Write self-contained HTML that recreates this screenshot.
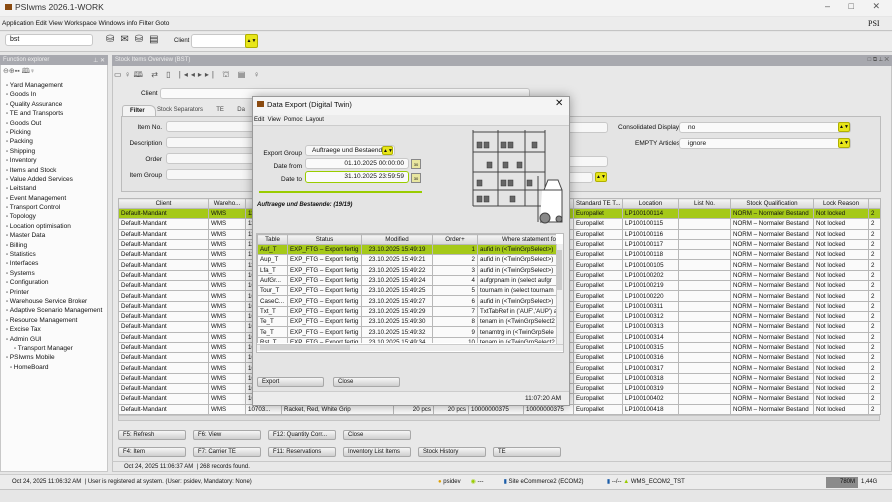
<!DOCTYPE html>
<html><head><meta charset="utf-8"><style>
*{box-sizing:border-box;margin:0;padding:0}
body{width:892px;height:502px;overflow:hidden;background:#e6e6e6;font-family:"Liberation Sans",sans-serif;font-size:7px;color:#111;position:relative}
.a{position:absolute}
.in{position:absolute;background:#f7f7f7;border:1px solid #c8c8c8;border-radius:3px}
.yl{position:absolute;background:#e8e61a;border:1px solid #b0b000;border-radius:2px;font-size:5px;text-align:center;line-height:8px}
table{border-collapse:collapse;table-layout:fixed;position:absolute;font-size:6.2px}
td,th{border:1px solid #b8b8b8;white-space:nowrap;overflow:hidden;padding:0 2px;height:10.3px;line-height:9px}
th{background:linear-gradient(#f4f4f4,#d8d8d8);font-weight:normal;height:9px}
tr.g td{background:#a5c919}
td{background:#fafafa}
.btn{position:absolute;height:10px;background:linear-gradient(#f6f6f6,#cfcfcf);border:1px solid #a8a8a8;border-radius:2px;font-size:6px;line-height:8px;padding-left:4px}
.tree div{height:9.4px;line-height:9.4px;font-size:6.5px;padding-left:6px}
.tree div:before{content:"▫ ";font-size:6px}
</style></head><body>
<div class="a" style="left:0;top:0;width:892px;height:16px;background:#f3f3f3"></div>
<div class="a" style="left:5px;top:4px;width:7px;height:6px;background:#8a4a10"></div>
<div class="a" style="left:15px;top:2px;font-size:8.5px;color:#333">PSIwms 2026.1-WORK</div>
<div class="a" style="left:825px;top:1px;font-size:9px;color:#555;word-spacing:16px">– □ ✕</div>
<div class="a" style="left:0;top:17px;width:892px;height:14px;background:#ececec;border-bottom:1px solid #c4c4c4"></div>
<div class="a" style="left:2px;top:20px;font-size:6.5px">Application Edit View Workspace Windows info Filter Goto</div>
<div class="a" style="left:868px;top:19px;font-size:8px;font-family:'Liberation Serif'">PSI</div>
<div class="a" style="left:0;top:32px;width:892px;height:20px;background:#ececec;border-bottom:1px solid #c4c4c4"></div>
<div class="in" style="left:5px;top:34px;width:88px;height:12px;background:#fff"><span style="position:absolute;left:4px;top:1px">bst</span></div>
<div class="a" style="left:106px;top:34px;font-size:10px;color:#333;letter-spacing:6px">⛁✉⛁▤</div>
<div class="a" style="left:174px;top:38px;font-size:6px">Client</div>
<div class="in" style="left:191px;top:34px;width:67px;height:14px;background:#fff"></div>
<div class="yl" style="left:245px;top:34px;width:13px;height:14px;line-height:12px">▲▼</div>
<div class="a" style="left:0;top:55px;width:108px;height:417px;background:#fbfbfb;border:1px solid #c8c8c8"></div>
<div class="a" style="left:0;top:55px;width:108px;height:10px;background:#a8a9af;color:#eee;font-size:6px;padding:2px 3px">Function explorer<span style="float:right">⊥ ✕</span></div>
<div class="a" style="left:3px;top:67px;font-size:7px;color:#666">⊖⊕▪▪ 🕮♀</div>
<div class="a tree" style="left:0;top:81px;width:108px">
<div>Yard Management</div><div>Goods In</div><div>Quality Assurance</div><div>TE and Transports</div><div>Goods Out</div><div>Picking</div><div>Packing</div><div>Shipping</div><div>Inventory</div><div>Items and Stock</div><div>Value Added Services</div><div>Leitstand</div><div>Event Management</div><div>Transport Control</div><div>Topology</div><div>Location optimisation</div><div>Master Data</div><div>Billing</div><div>Statistics</div><div>Interfaces</div><div>Systems</div><div>Configuration</div><div>Printer</div><div>Warehouse Service Broker</div><div>Adaptive Scenario Management</div><div>Resource Management</div><div>Excise Tax</div><div>Admin GUI</div><div style="padding-left:14px">Transport Manager</div><div>PSIwms Mobile</div><div style="padding-left:10px">HomeBoard</div>
</div>
<div class="a" style="left:112px;top:55px;width:780px;height:417px;background:#e8e8e8;border:1px solid #c4c4c4"></div>
<div class="a" style="left:112px;top:55px;width:780px;height:11px;background:#a8a9af;color:#eee;font-size:6px;padding:2px 3px">Stock Items Overview (BST)<span style="float:right;color:#555">□ ⧉ ⊥ ✕</span></div>
<div class="a" style="left:114px;top:69px;font-size:8px;color:#555;letter-spacing:3px">▭♀🕮 ⇄ ▯ |◂◂▸▸| ⛫ ▤ ♀</div>
<div class="a" style="left:141px;top:90px;font-size:6.5px">Client</div>
<div class="in" style="left:160px;top:88px;width:370px;height:11px;background:#fafafa"></div>
<div class="a" style="left:122px;top:105px;width:34px;height:11px;background:#f3f3f3;border:1px solid #bbb;border-bottom:none;border-radius:3px 6px 0 0;font-weight:bold;font-size:6px;padding:2px 7px">Filter</div>
<div class="a" style="left:157px;top:106px;font-size:6px;color:#444;padding-top:1px">Stock Separators &nbsp;&nbsp;&nbsp;&nbsp;&nbsp;&nbsp; TE &nbsp;&nbsp;&nbsp;&nbsp;&nbsp;&nbsp; Da</div>
<div class="a" style="left:121px;top:116px;width:760px;height:76px;background:#e4e4e4;border:1px solid #bcbcbc"></div>
<div class="a" style="left:126px;top:120px;width:36px;text-align:right;font-size:6.5px;line-height:16px">Item No.<br>Description<br>Order<br>Item Group</div>
<div class="in" style="left:166px;top:121px;width:100px;height:11px"></div>
<div class="in" style="left:166px;top:137px;width:100px;height:11px"></div>
<div class="in" style="left:166px;top:153px;width:100px;height:11px"></div>
<div class="in" style="left:166px;top:169px;width:100px;height:11px"></div>
<div class="in" style="left:565px;top:122px;width:43px;height:11px"></div>
<div class="in" style="left:565px;top:156px;width:43px;height:11px"></div>
<div class="in" style="left:565px;top:172px;width:28px;height:11px"></div>
<div class="yl" style="left:595px;top:172px;width:12px;height:10px">▲▼</div>
<div class="a" style="left:618px;top:124px;font-size:6.5px">Consolidated Display</div>
<div class="a" style="left:635px;top:140px;font-size:6.5px">EMPTY Articles</div>
<div class="in" style="left:679px;top:122px;width:172px;height:11px;padding-left:8px;font-size:6.5px;line-height:9px;background:#fafafa">no</div>
<div class="in" style="left:679px;top:138px;width:172px;height:11px;padding-left:8px;font-size:6.5px;line-height:9px;background:#fafafa">ignore</div>
<div class="yl" style="left:838px;top:122px;width:12px;height:10px">▲▼</div>
<div class="yl" style="left:838px;top:138px;width:12px;height:10px">▲▼</div>
<table style="left:118px;top:198px;width:762px">
<colgroup><col style="width:90px"><col style="width:37px"><col style="width:36px"><col style="width:112px"><col style="width:40px"><col style="width:35px"><col style="width:55px"><col style="width:50px"><col style="width:49px"><col style="width:56px"><col style="width:52px"><col style="width:83px"><col style="width:55px"><col style="width:12px"></colgroup>
<tr><th>Client</th><th>Wareho...</th><th>Item No.</th><th>Description</th><th></th><th></th><th></th><th></th><th>Standard TE T...</th><th>Location</th><th>List No.</th><th>Stock Qualification</th><th>Lock Reason</th><th></th></tr>
<tr class="g"><td>Default-Mandant</td><td>WMS</td><td>11581...</td><td></td><td></td><td></td><td></td><td></td><td>Europallet</td><td>LP100100114</td><td></td><td>NORM – Normaler Bestand</td><td>Not locked</td><td>2</td></tr>
<tr><td>Default-Mandant</td><td>WMS</td><td>11581...</td><td></td><td></td><td></td><td></td><td></td><td>Europallet</td><td>LP100100115</td><td></td><td>NORM – Normaler Bestand</td><td>Not locked</td><td>2</td></tr>
<tr><td>Default-Mandant</td><td>WMS</td><td>11581...</td><td></td><td></td><td></td><td></td><td></td><td>Europallet</td><td>LP100100116</td><td></td><td>NORM – Normaler Bestand</td><td>Not locked</td><td>2</td></tr>
<tr><td>Default-Mandant</td><td>WMS</td><td>11581...</td><td></td><td></td><td></td><td></td><td></td><td>Europallet</td><td>LP100100117</td><td></td><td>NORM – Normaler Bestand</td><td>Not locked</td><td>2</td></tr>
<tr><td>Default-Mandant</td><td>WMS</td><td>11581...</td><td></td><td></td><td></td><td></td><td></td><td>Europallet</td><td>LP100100118</td><td></td><td>NORM – Normaler Bestand</td><td>Not locked</td><td>2</td></tr>
<tr><td>Default-Mandant</td><td>WMS</td><td>11581...</td><td></td><td></td><td></td><td></td><td></td><td>Europallet</td><td>LP100100105</td><td></td><td>NORM – Normaler Bestand</td><td>Not locked</td><td>2</td></tr>
<tr><td>Default-Mandant</td><td>WMS</td><td>10904...</td><td></td><td></td><td></td><td></td><td></td><td>Europallet</td><td>LP100100202</td><td></td><td>NORM – Normaler Bestand</td><td>Not locked</td><td>2</td></tr>
<tr><td>Default-Mandant</td><td>WMS</td><td>10904...</td><td></td><td></td><td></td><td></td><td></td><td>Europallet</td><td>LP100100219</td><td></td><td>NORM – Normaler Bestand</td><td>Not locked</td><td>2</td></tr>
<tr><td>Default-Mandant</td><td>WMS</td><td>10904...</td><td></td><td></td><td></td><td></td><td></td><td>Europallet</td><td>LP100100220</td><td></td><td>NORM – Normaler Bestand</td><td>Not locked</td><td>2</td></tr>
<tr><td>Default-Mandant</td><td>WMS</td><td>10904...</td><td></td><td></td><td></td><td></td><td></td><td>Europallet</td><td>LP100100311</td><td></td><td>NORM – Normaler Bestand</td><td>Not locked</td><td>2</td></tr>
<tr><td>Default-Mandant</td><td>WMS</td><td>10904...</td><td></td><td></td><td></td><td></td><td></td><td>Europallet</td><td>LP100100312</td><td></td><td>NORM – Normaler Bestand</td><td>Not locked</td><td>2</td></tr>
<tr><td>Default-Mandant</td><td>WMS</td><td>10904...</td><td></td><td></td><td></td><td></td><td></td><td>Europallet</td><td>LP100100313</td><td></td><td>NORM – Normaler Bestand</td><td>Not locked</td><td>2</td></tr>
<tr><td>Default-Mandant</td><td>WMS</td><td>10904...</td><td></td><td></td><td></td><td></td><td></td><td>Europallet</td><td>LP100100314</td><td></td><td>NORM – Normaler Bestand</td><td>Not locked</td><td>2</td></tr>
<tr><td>Default-Mandant</td><td>WMS</td><td>10904...</td><td></td><td></td><td></td><td></td><td></td><td>Europallet</td><td>LP100100315</td><td></td><td>NORM – Normaler Bestand</td><td>Not locked</td><td>2</td></tr>
<tr><td>Default-Mandant</td><td>WMS</td><td>10904...</td><td></td><td></td><td></td><td></td><td></td><td>Europallet</td><td>LP100100316</td><td></td><td>NORM – Normaler Bestand</td><td>Not locked</td><td>2</td></tr>
<tr><td>Default-Mandant</td><td>WMS</td><td>10904...</td><td></td><td></td><td></td><td></td><td></td><td>Europallet</td><td>LP100100317</td><td></td><td>NORM – Normaler Bestand</td><td>Not locked</td><td>2</td></tr>
<tr><td>Default-Mandant</td><td>WMS</td><td>10904...</td><td></td><td></td><td></td><td></td><td></td><td>Europallet</td><td>LP100100318</td><td></td><td>NORM – Normaler Bestand</td><td>Not locked</td><td>2</td></tr>
<tr><td>Default-Mandant</td><td>WMS</td><td>10904...</td><td></td><td></td><td></td><td></td><td></td><td>Europallet</td><td>LP100100319</td><td></td><td>NORM – Normaler Bestand</td><td>Not locked</td><td>2</td></tr>
<tr><td>Default-Mandant</td><td>WMS</td><td>10703...</td><td></td><td></td><td></td><td></td><td></td><td>Europallet</td><td>LP100100402</td><td></td><td>NORM – Normaler Bestand</td><td>Not locked</td><td>2</td></tr>
<tr><td>Default-Mandant</td><td>WMS</td><td>10703...</td><td>Racket, Red, White Grip</td><td style="text-align:right">20 pcs</td><td style="text-align:right">20 pcs</td><td>10000000375</td><td>10000000375</td><td>Europallet</td><td>LP100100418</td><td></td><td>NORM – Normaler Bestand</td><td>Not locked</td><td>2</td></tr>
</table>
<div class="a" style="left:118px;top:415px;width:762px;height:6px;background:#ddd;border:1px solid #c4c4c4"></div>
<div class="btn" style="left:118px;top:430px;width:68px">F5: Refresh</div>
<div class="btn" style="left:193px;top:430px;width:68px">F6: View</div>
<div class="btn" style="left:268px;top:430px;width:68px">F12: Quantity Corr...</div>
<div class="btn" style="left:343px;top:430px;width:68px">Close</div>
<div class="btn" style="left:118px;top:447px;width:68px">F4: Item</div>
<div class="btn" style="left:193px;top:447px;width:68px">F7: Carrier TE</div>
<div class="btn" style="left:268px;top:447px;width:68px">F11: Reservations</div>
<div class="btn" style="left:343px;top:447px;width:68px">Inventory List Items</div>
<div class="btn" style="left:418px;top:447px;width:68px">Stock History</div>
<div class="btn" style="left:493px;top:447px;width:68px">TE</div>
<div class="a" style="left:112px;top:461px;width:780px;height:11px;border-top:1px solid #c8c8c8;font-size:6px;padding:2px 0 0 12px">Oct 24, 2025 11:06:37 AM &nbsp;| 268 records found.</div>
<div class="a" style="left:0;top:474px;width:892px;height:16px;background:#ececec;border-top:1px solid #ccc;border-bottom:1px solid #c4c4c4;font-size:6px;padding:4px 0 0 12px">Oct 24, 2025 11:06:32 AM &nbsp;| User is registered at system. (User: psidev, Mandatory: None)</div>
<div class="a" style="left:438px;top:478px;font-size:6px"><span style="color:#e0a000">●</span> psidev &nbsp;&nbsp;&nbsp;&nbsp; <span style="color:#9c0">◉</span> --- &nbsp;&nbsp;&nbsp;&nbsp;&nbsp;&nbsp;&nbsp;&nbsp;&nbsp;&nbsp; <span style="color:#1a5ca8">▮</span> Site eCommerce2 (ECOM2) &nbsp;&nbsp;&nbsp;&nbsp;&nbsp;&nbsp;&nbsp;&nbsp;&nbsp;&nbsp;&nbsp;&nbsp; <span style="color:#1a5ca8">▮</span> --/-- <span style="color:#9c0">▲</span> WMS_ECOM2_TST</div>
<div class="a" style="left:826px;top:477px;width:32px;height:11px;background:#8b8b8b;color:#111;font-size:6px;text-align:right;padding:2px 3px 0 0">780M</div>
<div class="a" style="left:861px;top:479px;font-size:6px">1,44G</div>
<div class="a" style="left:252px;top:96px;width:318px;height:310px;background:#e4e4e4;border:1px solid #999;box-shadow:0 0 10px rgba(0,0,0,.35)"></div>
<div class="a" style="left:253px;top:97px;width:316px;height:18px;background:#f4f4f4"></div>
<div class="a" style="left:257px;top:101px;width:7px;height:6px;background:#8a4a10"></div>
<div class="a" style="left:267px;top:100px;font-size:7.5px">Data Export (Digital Twin)</div>
<div class="a" style="left:555px;top:98px;font-size:10px">✕</div>
<div class="a" style="left:253px;top:115px;width:316px;height:11px;background:#ececec;border-bottom:1px solid #ccc;font-size:6px;padding:2px 0 0 1px">Edit &nbsp;View &nbsp;Pomoc &nbsp;Layout</div>
<div class="a" style="left:256px;top:147px;width:46px;text-align:right;font-size:6.5px;line-height:13px">Export Group<br>Date from<br>Date to</div>
<div class="in" style="left:305px;top:145px;width:90px;height:11px;padding-left:6px;font-size:6.5px;line-height:9px">Auftraege und Bestaende</div>
<div class="yl" style="left:382px;top:146px;width:11px;height:9px">▲▼</div>
<div class="in" style="left:305px;top:158px;width:104px;height:11px;text-align:right;padding-right:4px;font-size:6.5px;line-height:9px;background:#fafafa">01.10.2025 00:00:00</div>
<div class="in" style="left:305px;top:171px;width:104px;height:12px;border:1.5px solid #9c0;text-align:right;padding-right:4px;font-size:6.5px;line-height:9px;background:#fafafa">31.10.2025 23:59:59</div>
<div class="a" style="left:411px;top:159px;width:10px;height:10px;border:1px solid #888;background:#e8e6a0;font-size:4px;text-align:center;line-height:9px">30</div>
<div class="a" style="left:411px;top:173px;width:10px;height:10px;border:1px solid #888;background:#e8e6a0;font-size:4px;text-align:center;line-height:9px">30</div>
<div class="a" style="left:259px;top:191px;width:163px;height:2px;background:#9c0"></div>
<div class="a" style="left:257px;top:202px;font-size:6px;font-style:italic;font-weight:bold">Auftraege und Bestaende: (19/19)</div>
<svg class="a" style="left:470px;top:128px" width="96" height="100" viewBox="0 0 96 100" fill="none" stroke="#444" stroke-width="1">
<path d="M3 2V78M28 2V78M55 2V78M75 2V78M3 4H75M3 24H75M3 44H75M3 62H75M3 78H75"/>
<g fill="#666" stroke="#333" stroke-width=".5"><rect x="7" y="14" width="5" height="6"/><rect x="14" y="14" width="5" height="6"/><rect x="31" y="14" width="5" height="6"/><rect x="38" y="14" width="5" height="6"/><rect x="62" y="14" width="5" height="6"/><rect x="17" y="34" width="5" height="6"/><rect x="33" y="34" width="5" height="6"/><rect x="47" y="34" width="5" height="6"/><rect x="7" y="52" width="5" height="6"/><rect x="31" y="52" width="5" height="6"/><rect x="38" y="52" width="5" height="6"/><rect x="57" y="52" width="5" height="6"/><rect x="7" y="68" width="5" height="6"/><rect x="14" y="68" width="5" height="6"/><rect x="40" y="68" width="5" height="6"/></g>
<path d="M68 48V94M72 62H92V94H70M74 62L78 52H88L92 62" fill="#fff"/>
<circle cx="75" cy="90" r="5" fill="#888"/><circle cx="89" cy="91" r="3" fill="#888"/>
</svg>
<div class="a" style="left:256px;top:233px;width:308px;height:120px;background:#fff;border:1px solid #bbb"></div>
<div style="position:absolute;left:257px;top:234px;width:299px;height:109px;overflow:hidden">
<table style="left:0;top:0;width:320px">
<colgroup><col style="width:30px"><col style="width:74px"><col style="width:71px"><col style="width:45px"><col style="width:100px"></colgroup>
<tr><th>Table</th><th>Status</th><th>Modified</th><th>Order+</th><th style="text-align:left;padding-left:24px">Where statement fo</th></tr>
<tr class="g"><td>Auf_T</td><td>EXP_FTG – Export fertig</td><td style="text-align:center">23.10.2025 15:49:19</td><td style="text-align:right">1</td><td>aufid in (&lt;TwinGrpSelect&gt;)</td></tr>
<tr><td>Aup_T</td><td>EXP_FTG – Export fertig</td><td style="text-align:center">23.10.2025 15:49:21</td><td style="text-align:right">2</td><td>aufid in (&lt;TwinGrpSelect&gt;)</td></tr>
<tr><td>Lfa_T</td><td>EXP_FTG – Export fertig</td><td style="text-align:center">23.10.2025 15:49:22</td><td style="text-align:right">3</td><td>aufid in (&lt;TwinGrpSelect&gt;)</td></tr>
<tr><td>AufGr...</td><td>EXP_FTG – Export fertig</td><td style="text-align:center">23.10.2025 15:49:24</td><td style="text-align:right">4</td><td>aufgrpnam in (select aufgr</td></tr>
<tr><td>Tour_T</td><td>EXP_FTG – Export fertig</td><td style="text-align:center">23.10.2025 15:49:25</td><td style="text-align:right">5</td><td>tournam in (select tournam</td></tr>
<tr><td>CaseC...</td><td>EXP_FTG – Export fertig</td><td style="text-align:center">23.10.2025 15:49:27</td><td style="text-align:right">6</td><td>aufid in (&lt;TwinGrpSelect&gt;)</td></tr>
<tr><td>Txt_T</td><td>EXP_FTG – Export fertig</td><td style="text-align:center">23.10.2025 15:49:29</td><td style="text-align:right">7</td><td>TxtTabRef in ('AUF','AUP') a</td></tr>
<tr><td>Te_T</td><td>EXP_FTG – Export fertig</td><td style="text-align:center">23.10.2025 15:49:30</td><td style="text-align:right">8</td><td>tenam in (&lt;TwinGrpSelect2</td></tr>
<tr><td>Te_T</td><td>EXP_FTG – Export fertig</td><td style="text-align:center">23.10.2025 15:49:32</td><td style="text-align:right">9</td><td>tenamtrg in (&lt;TwinGrpSele</td></tr>
<tr><td>Rst_T</td><td>EXP_FTG – Export fertig</td><td style="text-align:center">23.10.2025 15:49:34</td><td style="text-align:right">10</td><td>tenam in (&lt;TwinGrpSelect2</td></tr>
</table></div>
<div class="a" style="left:556px;top:244px;width:7px;height:100px;background:#eee;border-left:1px solid #ccc"></div>
<div class="a" style="left:557px;top:250px;width:5px;height:40px;background:#ccc"></div>
<div class="a" style="left:257px;top:344px;width:306px;height:7px;background:#eee;border-top:1px solid #ccc"></div>
<div class="a" style="left:260px;top:345px;width:90px;height:5px;background:#d0d0d0"></div>
<div class="btn" style="left:257px;top:377px;width:67px">Export</div>
<div class="btn" style="left:333px;top:377px;width:67px">Close</div>
<div class="a" style="left:253px;top:391px;width:316px;height:14px;background:#ececec;border-top:1px solid #ccc;font-size:6.5px;padding:3px 8px 0 0;text-align:right">11:07:20 AM</div>
</body></html>
